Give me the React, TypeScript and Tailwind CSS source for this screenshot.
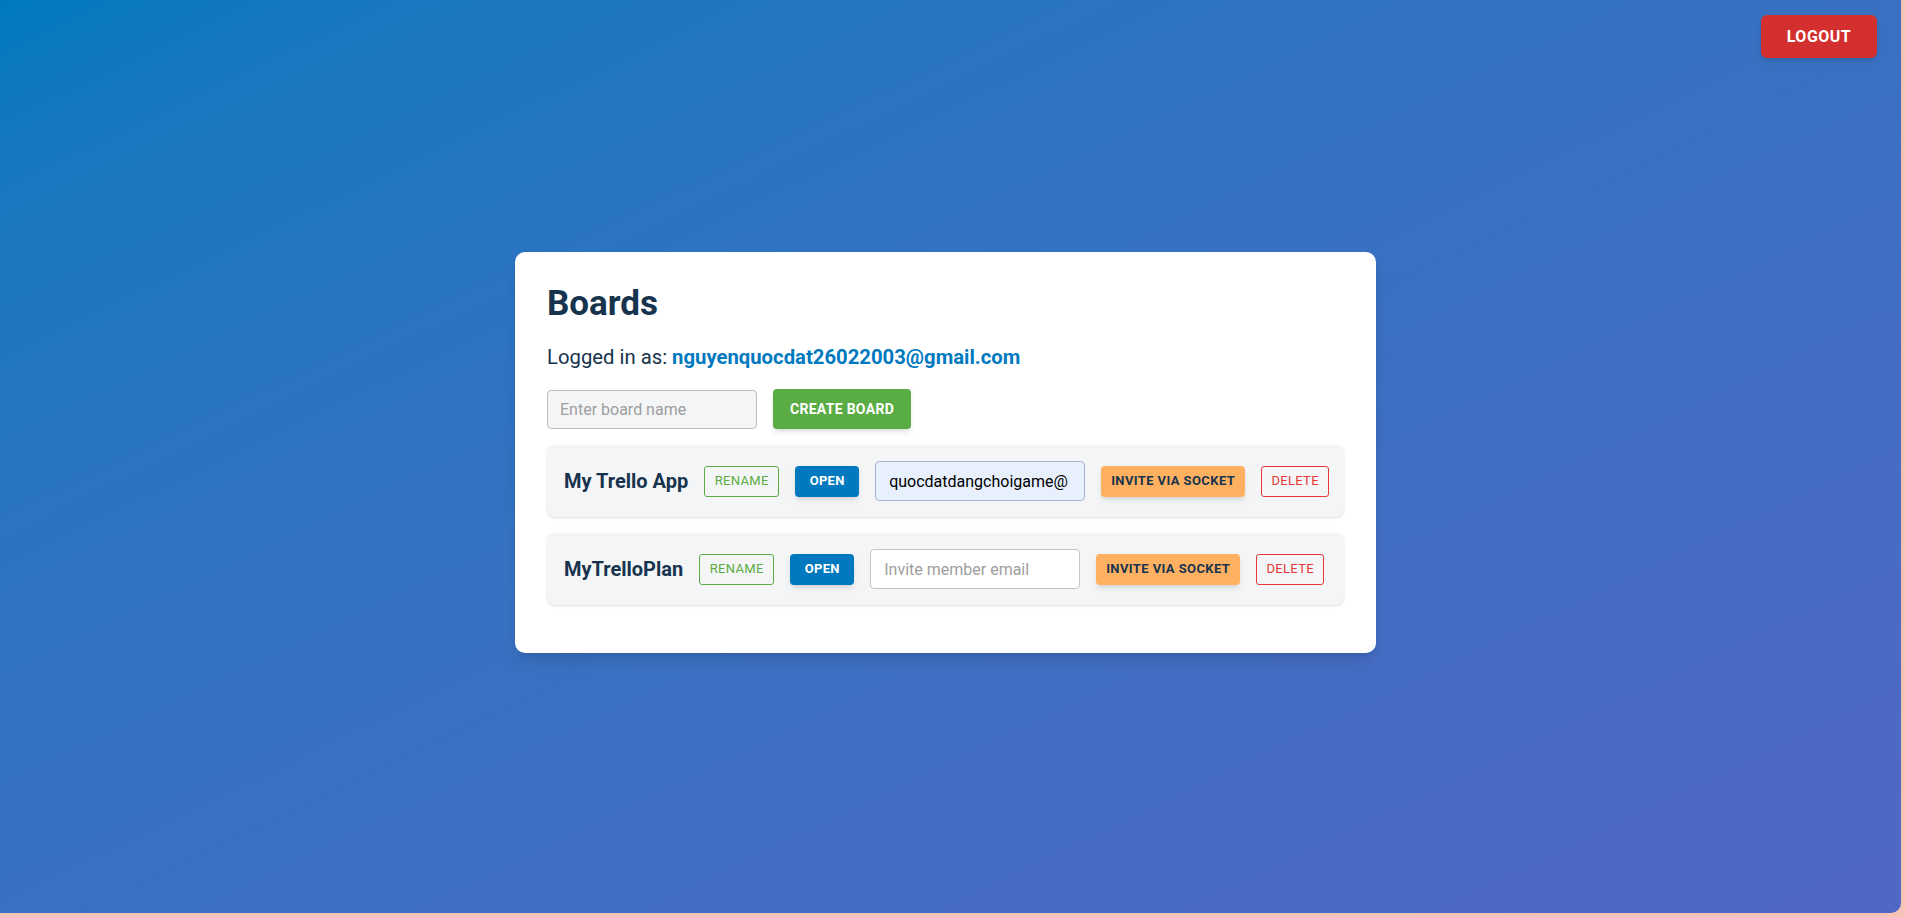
import { useState } from "react";

type Board = { id: number; name: string; invite: string };

const font = { fontFamily: "Roboto, 'Liberation Sans', sans-serif" };

export default function App() {
  const [boards] = useState<Board[]>([
    { id: 1, name: "My Trello App", invite: "quocdatdangchoigame@" },
    { id: 2, name: "MyTrelloPlan", invite: "" },
  ]);
  const [newBoard, setNewBoard] = useState("");

  return (
    <div className="min-h-screen w-full bg-[#f7c3b6]" style={font}>
      <div className="relative flex h-[913px] w-[1901px] items-center justify-center rounded-br-[10px] bg-gradient-to-br from-[#0079bf] to-[#5067c5] pb-2 pr-[10px]">
        <button className="absolute right-[24px] top-[15px] h-[43px] w-[116px] rounded-[6px] bg-[#d32f2f] text-[16px] font-bold tracking-[0.5px] text-white shadow-md">
          LOGOUT
        </button>

        {/* card */}
        <div className="w-[861px] rounded-[10px] bg-white px-8 pb-[48px] pt-[30px] shadow-lg">
          <h2 className="mb-[21px] text-[35px] font-bold leading-[43px] text-[#17334d]">Boards</h2>
          <p className="mb-[20px] text-[20.3px] leading-[23px] text-[#17334d]">
            Logged in as: <span className="font-bold text-[#0079bf]">nguyenquocdat26022003@gmail.com</span>
          </p>

          <div className="mb-4 flex items-center gap-4">
            <input
              value={newBoard}
              onChange={(e) => setNewBoard(e.target.value)}
              placeholder="Enter board name"
              className="h-[39px] w-[210px] shrink-0 rounded-[4px] border border-[#bdbdbd] bg-[#f4f5f7] px-3 text-[16px] text-[#17334d] outline-none placeholder:text-[#9e9e9e]"
            />
            <button className="h-[40px] w-[138px] shrink-0 rounded-[4px] bg-[#5aac44] text-[14px] font-bold tracking-[0.3px] text-white shadow-md">
              CREATE BOARD
            </button>
          </div>

          <div className="flex flex-col gap-4">
            {boards.map((b) => (
              <div key={b.id} className="flex h-[72px] items-center gap-4 rounded-[8px] bg-[#f4f5f7] pl-[17px] pr-4 shadow-sm">
                <span className="shrink-0 whitespace-nowrap text-[20px] font-bold text-[#17334d]">{b.name}</span>
                <button className="h-[31px] w-[75px] shrink-0 rounded-[3px] border border-[#5aac44] text-[13px] tracking-[0.3px] text-[#5aac44]">
                  RENAME
                </button>
                <button className="h-[31px] w-[64px] shrink-0 rounded-[4px] bg-[#0079bf] text-[13px] font-bold tracking-[0.3px] text-white shadow-md">
                  OPEN
                </button>
                <input
                  defaultValue={b.invite}
                  placeholder="Invite member email"
                  className={`h-[40px] w-[210px] shrink-0 rounded-[4px] border px-[13px] text-[16px] text-black outline-none placeholder:text-[#9e9e9e] ${
                    b.invite ? "border-[#a9b3c6] bg-[#e8f0fe]" : "border-[#c4c4c4] bg-white"
                  }`}
                />
                <button className="h-[31px] w-[144px] shrink-0 rounded-[4px] bg-[#ffb161] text-[13px] font-bold tracking-[0.4px] text-[#17334d] shadow-md">
                  INVITE VIA SOCKET
                </button>
                <button className="h-[31px] w-[68px] shrink-0 rounded-[3px] border border-[#e53935] text-[13px] tracking-[0.3px] text-[#e53935]">
                  DELETE
                </button>
              </div>
            ))}
          </div>
        </div>
      </div>
    </div>
  );
}
